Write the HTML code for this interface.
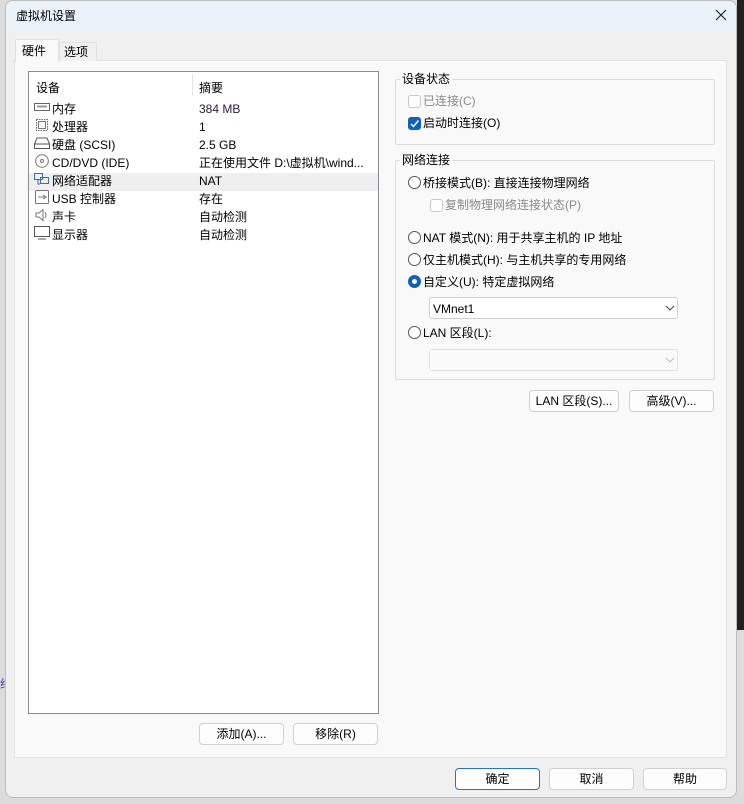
<!DOCTYPE html>
<html><head><meta charset="utf-8"><style>
*{box-sizing:border-box;margin:0;padding:0}
body{width:744px;height:804px;background:#dcdcdc;position:relative;overflow:hidden;font-family:"Liberation Sans","Noto Sans CJK SC",sans-serif;font-size:12px;color:#000}
.abs{position:absolute}
.win{left:5px;top:0;width:732px;height:798px;background:#f0f0f0;border:1px solid #bdbdbd;border-radius:8px;overflow:hidden}
.title{left:0;top:0;width:100%;height:31px;background:#eaf3fa}
.pane{left:8px;top:59px;width:713px;height:698px;background:#f9f9f9;border:1px solid #e2e2e2}
.list{left:22px;top:70px;width:351px;height:643px;background:#fff;border:1px solid #8a8a95}
.row{position:absolute;left:0;height:18px;line-height:18px;width:349px}
.btn{position:absolute;height:22px;background:#fdfdfd;border:1px solid #d0d0d0;border-radius:4px;text-align:center;line-height:20px;font-size:12px}
.grp{position:absolute;border:1px solid #dcdcdc;border-radius:2px}
.gl{position:absolute;background:#f9f9f9;padding:0 2px;line-height:14px}
.rad{position:absolute;width:13px;height:13px;border:1px solid #555;border-radius:50%;background:#fff}
.cb{position:absolute;width:13px;height:13px;border:1px solid #c8c8c8;border-radius:3px;background:#fff}
.t{position:absolute;line-height:16px;white-space:nowrap}
.ic{position:absolute;left:5px;width:16px;height:14px}
</style></head><body>
<div class="abs" style="left:737px;top:0;width:7px;height:630px;background:#202020"></div>
<div class="abs" style="left:0;top:676px;width:5px;height:80px;color:#5040a0;font-size:12px;line-height:16px">络</div>
<div class="abs win">
 <div class="abs title"></div>
 <div class="t" style="left:10px;top:7px;font-size:12px">虚拟机设置</div>
 <svg class="abs" style="left:709px;top:8px" width="12" height="12"><path d="M1 1L11 11M11 1L1 11" stroke="#222" stroke-width="1.2"/></svg>
 <div class="abs pane"></div>
 <div class="abs" style="left:9px;top:38px;width:44px;height:23px;background:#f9f9f9;border:1px solid #e2e2e2;border-bottom:none"></div>
 <div class="t" style="left:16px;top:42px">硬件</div>
 <div class="abs" style="left:53px;top:41px;width:38px;height:19px;background:#f0f0f0;border:1px solid #e2e2e2;border-bottom:none"></div>
 <div class="t" style="left:58px;top:43px">选项</div>
 <div class="abs list">
  <div class="row" style="top:7px"><span class="t" style="left:7px;top:1px">设备</span><span class="t" style="left:170px;top:1px">摘要</span></div>
  <div class="abs" style="left:163px;top:2px;width:1px;height:22px;background:#e5e5e5"></div>
  <div class="abs" style="left:0;top:101px;width:349px;height:18px;background:#efefef"></div>
  <div class="row" style="top:28px"><svg class="ic" viewBox="0 0 16 14"><rect x="0.5" y="3.5" width="15" height="7" fill="none" stroke="#666"/><rect x="3" y="5.5" width="10" height="2" fill="#999"/></svg><span class="t" style="left:23px;top:1px">内存</span><span class="t" style="left:170px;top:1px;color:#2a1a3a">384 MB</span></div>
  <div class="row" style="top:46px"><svg class="ic" viewBox="0 0 16 14"><rect x="2.5" y="1.5" width="11" height="11" fill="none" stroke="#666" stroke-dasharray="1.5 1"/><rect x="4.5" y="3.5" width="7" height="7" fill="none" stroke="#777"/></svg><span class="t" style="left:23px;top:1px">处理器</span><span class="t" style="left:170px;top:1px">1</span></div>
  <div class="row" style="top:64px"><svg class="ic" viewBox="0 0 16 14"><path d="M3 2H13L15.5 8V12.5H0.5V8Z M0.5 8H15.5" fill="none" stroke="#555"/></svg><span class="t" style="left:23px;top:1px">硬盘 (SCSI)</span><span class="t" style="left:170px;top:1px">2.5 GB</span></div>
  <div class="row" style="top:82px"><svg class="ic" viewBox="0 0 16 14"><circle cx="8" cy="7" r="6.3" fill="none" stroke="#777"/><circle cx="8" cy="7" r="1.5" fill="none" stroke="#777"/></svg><span class="t" style="left:23px;top:1px">CD/DVD (IDE)</span><span class="t" style="left:170px;top:1px">正在使用文件 D:\虚拟机\wind...</span></div>
  <div class="row" style="top:100px"><svg class="ic" viewBox="0 0 16 14"><rect x="0.5" y="1.5" width="8" height="6" fill="none" stroke="#3a6fa0"/><rect x="6.5" y="5.5" width="8" height="6" fill="none" stroke="#3a6fa0"/><path d="M4 8V12H6" stroke="#3a6fa0" fill="none"/></svg><span class="t" style="left:23px;top:1px">网络适配器</span><span class="t" style="left:170px;top:1px">NAT</span></div>
  <div class="row" style="top:118px"><svg class="ic" viewBox="0 0 16 14"><rect x="1.5" y="0.5" width="13" height="13" rx="1" fill="none" stroke="#777"/><path d="M4 7H12M9 5L12 7L9 9" stroke="#777" fill="none"/></svg><span class="t" style="left:23px;top:1px">USB 控制器</span><span class="t" style="left:170px;top:1px">存在</span></div>
  <div class="row" style="top:136px"><svg class="ic" viewBox="0 0 16 14"><path d="M2 5H5L9 1.5V12.5L5 9H2Z M11 4Q13 7 11 10" fill="none" stroke="#777"/></svg><span class="t" style="left:23px;top:1px">声卡</span><span class="t" style="left:170px;top:1px">自动检测</span></div>
  <div class="row" style="top:154px"><svg class="ic" viewBox="0 0 16 14"><rect x="0.5" y="0.5" width="15" height="10" fill="none" stroke="#555"/><path d="M4 13H12" stroke="#555"/></svg><span class="t" style="left:23px;top:1px">显示器</span><span class="t" style="left:170px;top:1px">自动检测</span></div>
 </div>
 <div class="btn" style="left:193px;top:722px;width:85px">添加(A)...</div>
 <div class="btn" style="left:287px;top:722px;width:85px">移除(R)</div>

 <div class="grp" style="left:389px;top:78px;width:320px;height:66px"></div>
 <div class="gl" style="left:394px;top:71px">设备状态</div>
 <div class="cb" style="left:402px;top:94px"></div>
 <div class="t" style="left:417px;top:92px;color:#8a8a8a">已连接(C)</div>
 <div class="cb" style="left:402px;top:116px;background:#0f62b8;border-color:#0f62b8"><svg width="11" height="11" style="position:absolute;left:0;top:0"><path d="M2 6L4.5 8.5L9.5 2.5" stroke="#fff" stroke-width="1.4" fill="none"/></svg></div>
 <div class="t" style="left:417px;top:114px">启动时连接(O)</div>

 <div class="grp" style="left:389px;top:159px;width:320px;height:220px"></div>
 <div class="gl" style="left:394px;top:152px">网络连接</div>
 <div class="rad" style="left:402px;top:175px"></div>
 <div class="t" style="left:417px;top:174px">桥接模式(B): 直接连接物理网络</div>
 <div class="cb" style="left:424px;top:198px"></div>
 <div class="t" style="left:439px;top:196px;color:#8a8a8a">复制物理网络连接状态(P)</div>
 <div class="rad" style="left:402px;top:230px"></div>
 <div class="t" style="left:417px;top:229px">NAT 模式(N): 用于共享主机的 IP 地址</div>
 <div class="rad" style="left:402px;top:252px"></div>
 <div class="t" style="left:417px;top:251px">仅主机模式(H): 与主机共享的专用网络</div>
 <div class="rad" style="left:402px;top:274px;border:4px solid #0f62b8"></div>
 <div class="t" style="left:417px;top:273px">自定义(U): 特定虚拟网络</div>
 <div class="abs" style="left:423px;top:296px;width:249px;height:22px;background:#fff;border:1px solid #d0d0d0;border-radius:3px"></div>
 <div class="t" style="left:427px;top:300px">VMnet1</div>
 <svg class="abs" style="left:659px;top:304px" width="10" height="6"><path d="M1 1L5 5L9 1" stroke="#444" fill="none"/></svg>
 <div class="rad" style="left:402px;top:325px"></div>
 <div class="t" style="left:417px;top:324px">LAN 区段(L):</div>
 <div class="abs" style="left:423px;top:348px;width:249px;height:22px;background:#fafafa;border:1px solid #e0e0e0;border-radius:3px"></div>
 <svg class="abs" style="left:659px;top:356px" width="10" height="6"><path d="M1 1L5 5L9 1" stroke="#bbb" fill="none"/></svg>
 <div class="btn" style="left:523px;top:389px;width:90px">LAN 区段(S)...</div>
 <div class="btn" style="left:623px;top:389px;width:85px">高级(V)...</div>

 <div class="btn" style="left:449px;top:767px;width:85px;border-color:#2a72c0">确定</div>
 <div class="btn" style="left:543px;top:767px;width:85px">取消</div>
 <div class="btn" style="left:637px;top:767px;width:84px">帮助</div>
</div>
</body></html>
